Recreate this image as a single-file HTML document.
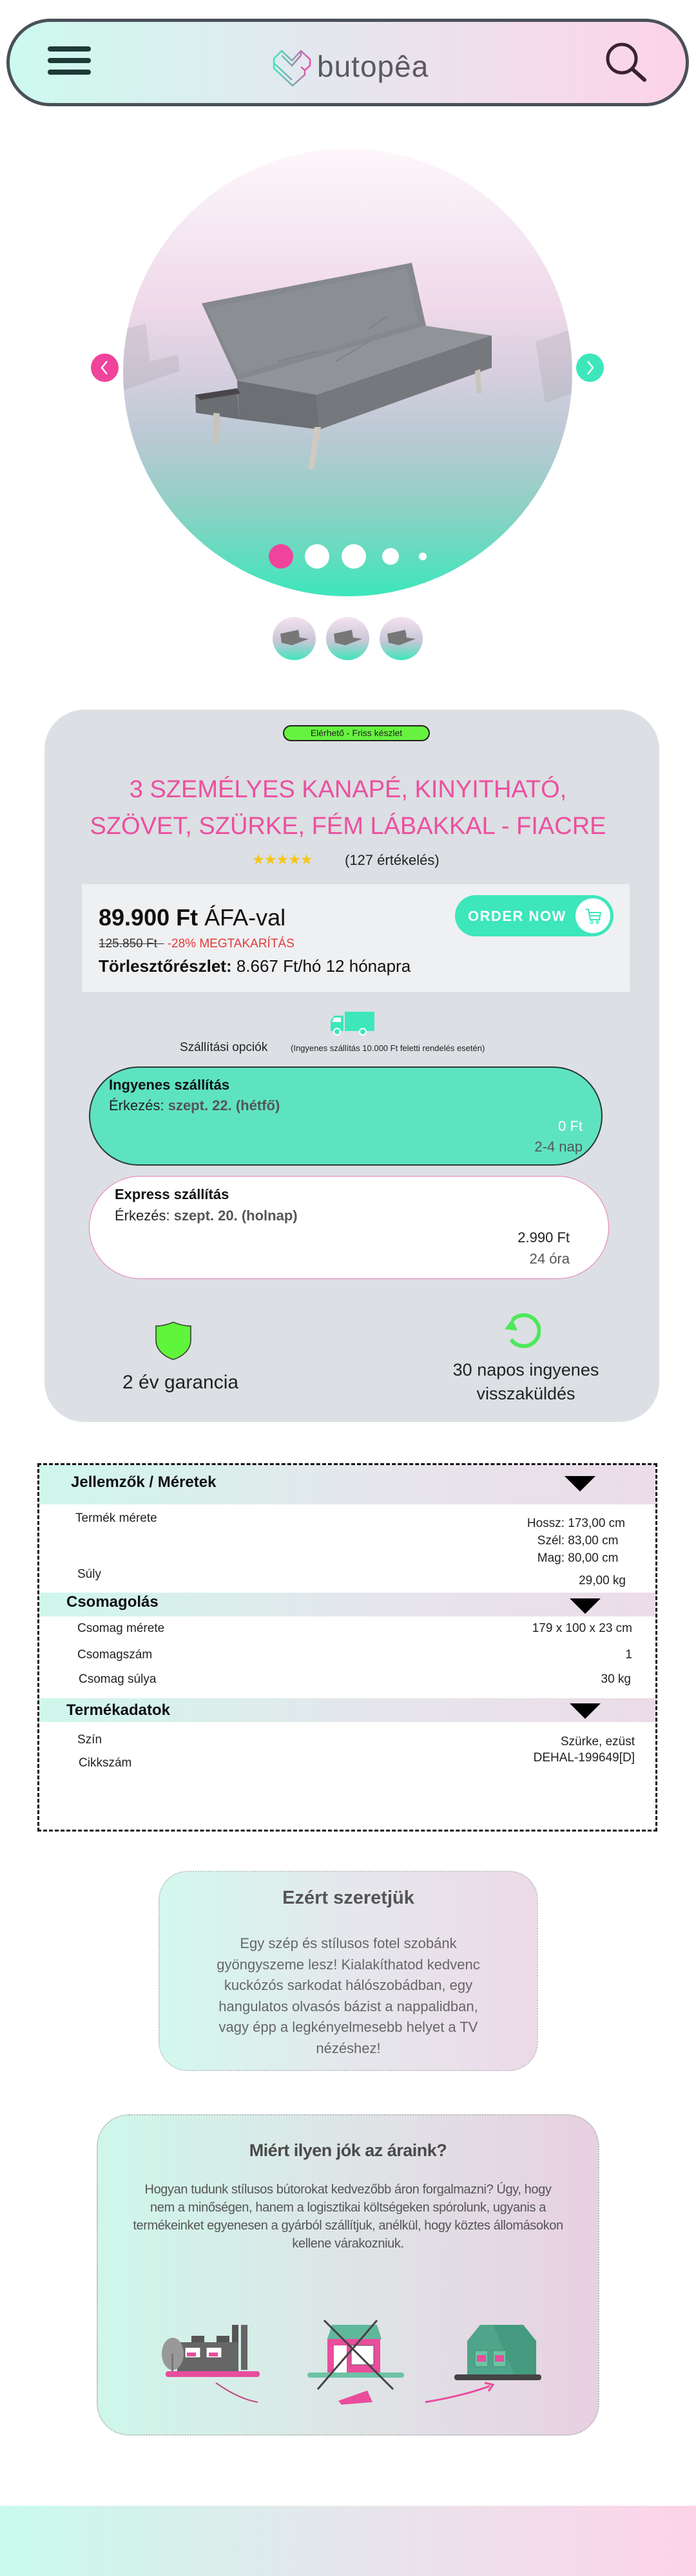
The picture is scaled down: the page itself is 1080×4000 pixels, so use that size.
<!DOCTYPE html>
<html><head><meta charset="utf-8">
<style>
*{margin:0;padding:0;box-sizing:border-box}
body{width:1080px;height:4000px;position:relative;background:#fff;font-family:"Liberation Sans",sans-serif;overflow:hidden;color:#111}
.a{position:absolute;white-space:nowrap}
.hdr{left:10px;top:29px;width:1059px;height:136px;border-radius:68px;border:5px solid #4a5058;background:linear-gradient(90deg,#cdfaee,#e6e6ee 50%,#fdd3e8)}
.circ{left:191px;top:231px;width:697px;height:695px;border-radius:50%;background:linear-gradient(180deg,#fdf7fb 0%,#efd9ea 35%,#d7cfe0 50%,#b9c9d3 65%,#8fd0c6 80%,#3de6bb 100%);overflow:hidden}
.dot{position:absolute;border-radius:50%;background:#fff}
.thumb{position:absolute;top:958px;width:67px;height:67px;border-radius:50%;background:linear-gradient(180deg,#f5e3f0,#c9c6d8 55%,#3de6bb)}
.card{left:69px;top:1102px;width:954px;height:1106px;border-radius:62px;background:#dcdfe3}
.t{position:absolute;white-space:nowrap;line-height:1}
.row{position:absolute;font-size:19px;color:#222;line-height:1}
.hrow{position:absolute;left:61px;width:956px;background:linear-gradient(90deg,#cff7ec,#e6e6ec 55%,#ecdce8)}
.tri{position:absolute;width:0;height:0;border-left:24px solid transparent;border-right:24px solid transparent;border-top:24px solid #000}
</style></head><body>

<div class="a hdr"></div>
<div class="a" style="left:74px;top:72px;width:67px;height:45px">
 <div style="height:8px;background:#1d3a36;border-radius:4px;margin-bottom:10px"></div>
 <div style="height:8px;background:#1d3a36;border-radius:4px;margin-bottom:10px"></div>
 <div style="height:8px;background:#1d3a36;border-radius:4px"></div>
</div>
<svg class="a" style="left:421px;top:76px" width="66" height="60" viewBox="0 0 66 60">
 <defs><linearGradient id="lg" x1="0" x2="1"><stop offset="0" stop-color="#3de6bb"/><stop offset="0.6" stop-color="#8a9bb0"/><stop offset="1" stop-color="#f04ab0"/></linearGradient></defs>
 <g fill="none" stroke="url(#lg)" stroke-width="2.5" stroke-linejoin="round">
  <path d="M4 15 L16 3 L32 18 L46 3 L60 16 L60 26 L52 33 L52 40 L33 57 L4 30 Z"/>
  <path d="M4 22 L32 48 M16 10 L32 26 L46 10 M46 3 L46 10 M52 33 L46 28"/>
 </g>
</svg>
<div class="a" style="left:492px;top:78px;font-size:46px;color:#5a5860;letter-spacing:1px;line-height:50px">butopêa</div>
<svg class="a" style="left:938px;top:64px" width="68" height="64" viewBox="0 0 68 64">
 <circle cx="27" cy="27" r="22" fill="none" stroke="#3a2230" stroke-width="5"/>
 <path d="M43 43 L62 60" stroke="#3a2230" stroke-width="6" stroke-linecap="round"/>
</svg>

<div class="a circ">
 <svg style="position:absolute;left:0;top:0" width="697" height="695" viewBox="0 0 697 695">
  <g opacity="0.18" fill="#888">
   <path d="M0 280 L35 272 L42 330 L85 320 L88 345 L0 375 Z"/>
   <path d="M640 300 L695 280 L697 380 L655 395 Z"/>
  </g>
  <path d="M122 240 L448 177 L470 275 L177 360 Z" fill="#85888c"/>
  <path d="M130 248 L440 186 L458 270 L180 350 Z" fill="#8b8e92"/>
  <path d="M177 360 L470 275 L572 290 L300 382 Z" fill="#909397"/>
  <path d="M300 382 L572 290 L572 340 L305 436 Z" fill="#75787c"/>
  <path d="M177 360 L300 382 L305 436 L180 420 Z" fill="#6c6f73"/>
  <path d="M112 382 L177 372 L180 420 L113 410 Z" fill="#6a6d71"/>
  <path d="M112 382 L177 372 L182 380 L120 390 Z" fill="#4a4548"/>
  <path d="M140 410 L150 411 L148 460 L140 458 Z" fill="#c8c4bc"/>
  <path d="M297 432 L307 432 L296 498 L287 497 Z" fill="#cfcac2"/>
  <path d="M546 345 L554 342 L556 380 L549 380 Z" fill="#c8c4bc"/>
  <path d="M240 330 L300 315 M330 330 L380 300 M380 280 L410 260" stroke="#7a7d81" stroke-width="1.5"/>
 </svg>
 <div class="dot" style="left:226px;top:614px;width:38px;height:38px;background:#f0449c"></div>
 <div class="dot" style="left:282px;top:614px;width:38px;height:38px"></div>
 <div class="dot" style="left:339px;top:614px;width:38px;height:38px"></div>
 <div class="dot" style="left:402px;top:620px;width:26px;height:26px"></div>
 <div class="dot" style="left:459px;top:627px;width:12px;height:12px"></div>
</div>
<div class="a" style="left:141px;top:549px;width:43px;height:44px;border-radius:50%;background:#f0449c"></div>
<svg class="a" style="left:141px;top:549px" width="43" height="44"><path d="M25 12 L17 22 L25 32" fill="none" stroke="#fff" stroke-width="2.5"/></svg>
<div class="a" style="left:894px;top:549px;width:43px;height:44px;border-radius:50%;background:#3de6bb"></div>
<svg class="a" style="left:894px;top:549px" width="43" height="44"><path d="M18 12 L26 22 L18 32" fill="none" stroke="#fff" stroke-width="2.5"/></svg>
<div class="thumb" style="left:423px"></div>
<div class="thumb" style="left:506px"></div>
<div class="thumb" style="left:589px"></div>
<svg class="a" style="left:423px;top:958px" width="250" height="67"><g fill="#777">
<path d="M12 26 L40 20 L42 32 L56 34 L30 44 L14 40 Z"/><path d="M95 26 L123 20 L125 32 L139 34 L113 44 L97 40 Z"/><path d="M178 26 L206 20 L208 32 L222 34 L196 44 L180 40 Z"/></g></svg>

<div class="a card"></div>
<div class="a" style="left:439px;top:1126px;width:228px;height:25px;border-radius:13px;background:#66f33f;border:2px solid #222;font-size:14px;text-align:center;line-height:21px;color:#222">Elérhető - Friss készlet</div>
<div class="t" style="left:0;width:1080px;text-align:center;top:1207px;font-size:38px;color:#ec4fa0">3 SZEMÉLYES KANAPÉ, KINYITHATÓ,</div>
<div class="t" style="left:0;width:1080px;text-align:center;top:1264px;font-size:38px;color:#ec4fa0">SZÖVET, SZÜRKE, FÉM LÁBAKKAL - FIACRE</div>
<div class="t" style="left:391px;top:1324px;font-size:22px;color:#f5c518;letter-spacing:-1px">★★★★★</div>
<div class="t" style="left:535px;top:1325px;font-size:22px;color:#222">(127 értékelés)</div>

<div class="a" style="left:127px;top:1373px;width:850px;height:167px;background:#eff0f2"></div>
<div class="t" style="left:153px;top:1407px;font-size:36px;color:#111"><b>89.900 Ft</b> ÁFA-val</div>
<div class="t" style="left:153px;top:1456px;font-size:19px;color:#333"><s>125.850 Ft&nbsp;&nbsp;</s> <span style="color:#e23a3a">-28% MEGTAKARÍTÁS</span></div>
<div class="t" style="left:153px;top:1487px;font-size:26px;color:#111"><b>Törlesztőrészlet:</b> 8.667 Ft/hó 12 hónapra</div>
<div class="a" style="left:706px;top:1390px;width:246px;height:64px;border-radius:32px;background:#3de6bb"></div>
<div class="t" style="left:726px;top:1412px;font-size:22px;font-weight:bold;color:#fff;letter-spacing:1.5px">ORDER NOW</div>
<div class="a" style="left:893px;top:1395px;width:54px;height:54px;border-radius:50%;background:#fff"></div>
<svg class="a" style="left:900px;top:1402px" width="40" height="40" viewBox="0 0 40 40"><path d="M9 10 L13 10 L16 26 L30 26 L32 15 L14 15 M16 20 L31 20" fill="none" stroke="#3de6bb" stroke-width="2"/><circle cx="18" cy="30" r="2" fill="none" stroke="#3de6bb" stroke-width="1.5"/><circle cx="27" cy="30" r="2" fill="none" stroke="#3de6bb" stroke-width="1.5"/></svg>

<svg class="a" style="left:511px;top:1571px" width="70" height="38" viewBox="0 0 70 38"><path d="M24 0 H70 V30 H24 Z" fill="#3de6bb"/><path d="M2 14 L8 6 H22 V30 H2 Z" fill="#3de6bb"/><path d="M8 9 H18 V16 H4 Z" fill="#fff"/><circle cx="12" cy="31" r="5" fill="#3de6bb" stroke="#fff" stroke-width="2"/><circle cx="52" cy="31" r="5" fill="#3de6bb" stroke="#fff" stroke-width="2"/></svg>
<div class="t" style="left:279px;top:1617px;font-size:19px;color:#222">Szállítási opciók</div>
<div class="t" style="left:451px;top:1621px;font-size:13px;color:#222">(Ingyenes szállítás 10.000 Ft feletti rendelés esetén)</div>

<div class="a" style="left:138px;top:1656px;width:797px;height:154px;border-radius:77px;background:#5ee3c1;border:2px solid #2a3a36"></div>
<div class="t" style="left:169px;top:1674px;font-size:22px;font-weight:bold;color:#111">Ingyenes szállítás</div>
<div class="t" style="left:169px;top:1706px;font-size:22px;color:#222">Érkezés: <b style="color:#555">szept. 22. (hétfő)</b></div>
<div class="t" style="left:700px;width:204px;text-align:right;top:1738px;font-size:22px;color:#fff">0 Ft</div>
<div class="t" style="left:700px;width:204px;text-align:right;top:1770px;font-size:22px;color:#555">2-4 nap</div>

<div class="a" style="left:138px;top:1826px;width:807px;height:160px;border-radius:80px;background:#fff;border:1.5px solid #e87cb6"></div>
<div class="t" style="left:178px;top:1844px;font-size:22px;font-weight:bold;color:#111">Express szállítás</div>
<div class="t" style="left:178px;top:1877px;font-size:22px;color:#222">Érkezés: <b style="color:#555">szept. 20. (holnap)</b></div>
<div class="t" style="left:680px;width:204px;text-align:right;top:1911px;font-size:22px;color:#222">2.990 Ft</div>
<div class="t" style="left:680px;width:204px;text-align:right;top:1944px;font-size:22px;color:#555">24 óra</div>

<svg class="a" style="left:240px;top:2051px" width="58" height="62" viewBox="0 0 58 62"><path d="M29 2 C20 6 10 8 2 8 V30 C2 46 16 56 29 60 C42 56 56 46 56 30 V8 C48 8 38 6 29 2 Z" fill="#5ff53a" stroke="#333" stroke-width="1.5"/></svg>
<div class="t" style="left:130px;width:300px;text-align:center;top:2132px;font-size:30px;color:#222">2 év garancia</div>
<svg class="a" style="left:777px;top:2034px" width="62" height="60" viewBox="0 0 62 60"><path d="M18 16 A24 24 0 1 1 16 46" fill="none" stroke="#4ee85a" stroke-width="6"/><path d="M6 30 L18 14 L26 32 Z" fill="#4ee85a"/></svg>
<div class="t" style="left:616px;width:400px;text-align:center;top:2109px;font-size:27px;color:#222;line-height:37px">30 napos ingyenes<br>visszaküldés</div>

<div class="a" style="left:58px;top:2272px;width:962px;height:572px;border:3px dashed #111"></div>
<div class="hrow" style="top:2275px;height:61px"></div>
<div class="t" style="left:110px;top:2290px;font-size:24px;font-weight:bold">Jellemzők / Méretek</div>
<div class="tri" style="left:876px;top:2292px"></div>
<div class="row" style="left:117px;top:2348px">Termék mérete</div>
<div class="row" style="left:700px;width:270px;text-align:right;top:2352px;line-height:27px">Hossz: 173,00 cm<br>Szél: 83,00 cm&nbsp;&nbsp;<br>Mag: 80,00 cm&nbsp;&nbsp;</div>
<div class="row" style="left:120px;top:2435px">Súly</div>
<div class="row" style="left:700px;width:271px;text-align:right;top:2445px">29,00 kg</div>
<div class="hrow" style="top:2473px;height:37px"></div>
<div class="t" style="left:103px;top:2476px;font-size:24px;font-weight:bold">Csomagolás</div>
<div class="tri" style="left:884px;top:2482px"></div>
<div class="row" style="left:120px;top:2519px">Csomag mérete</div>
<div class="row" style="left:700px;width:281px;text-align:right;top:2519px">179 x 100 x 23 cm</div>
<div class="row" style="left:120px;top:2560px">Csomagszám</div>
<div class="row" style="left:700px;width:281px;text-align:right;top:2560px">1</div>
<div class="row" style="left:122px;top:2598px">Csomag súlya</div>
<div class="row" style="left:700px;width:279px;text-align:right;top:2598px">30 kg</div>
<div class="hrow" style="top:2637px;height:37px"></div>
<div class="t" style="left:103px;top:2644px;font-size:24px;font-weight:bold">Termékadatok</div>
<div class="tri" style="left:884px;top:2645px"></div>
<div class="row" style="left:120px;top:2692px">Szín</div>
<div class="row" style="left:700px;width:285px;text-align:right;top:2692px;line-height:25px">Szürke, ezüst<br>DEHAL-199649[D]</div>
<div class="row" style="left:122px;top:2728px">Cikkszám</div>

<div class="a" style="left:246px;top:2905px;width:589px;height:311px;border-radius:45px;border:2px dotted #c8c8c8;background:linear-gradient(90deg,#d3f8ee,#e6e6ec 55%,#ecdae8)"></div>
<div class="t" style="left:246px;width:589px;text-align:center;top:2933px;font-size:29px;font-weight:bold;color:#555">Ezért szeretjük</div>
<div class="a" style="left:246px;width:589px;text-align:center;top:3002px;font-size:22px;color:#666;line-height:32.5px">Egy szép és stílusos fotel szobánk<br>gyöngyszeme lesz! Kialakíthatod kedvenc<br>kuckózós sarkodat hálószobádban, egy<br>hangulatos olvasós bázist a nappalidban,<br>vagy épp a legkényelmesebb helyet a TV<br>nézéshez!</div>

<div class="a" style="left:150px;top:3283px;width:780px;height:499px;border-radius:50px;border:2px dotted #bbb;background:linear-gradient(90deg,#cef7ea,#dfe3e6 55%,#e8d0e2)"></div>
<div class="t" style="left:150px;width:780px;text-align:center;top:3326px;font-size:27px;font-weight:bold;color:#4a4a4a;letter-spacing:-0.5px">Miért ilyen jók az áraink?</div>
<div class="a" style="left:150px;width:780px;text-align:center;top:3386px;font-size:20px;color:#555;line-height:28px;letter-spacing:-0.4px">Hogyan tudunk stílusos bútorokat kedvezőbb áron forgalmazni? Úgy, hogy<br>nem a minőségen, hanem a logisztikai költségeken spórolunk, ugyanis a<br>termékeinket egyenesen a gyárból szállítjuk, anélkül, hogy köztes állomásokon<br>kellene várakozniuk.</div>
<svg class="a" style="left:240px;top:3600px" width="620" height="135" viewBox="0 0 620 135">
 <rect x="120" y="10" width="10" height="70" fill="#555"/><rect x="134" y="10" width="10" height="70" fill="#666"/>
 <rect x="57" y="27" width="20" height="12" fill="#555"/><rect x="96" y="27" width="20" height="12" fill="#555"/>
 <rect x="35" y="37" width="95" height="45" fill="#666"/>
 <rect x="47" y="45" width="24" height="16" fill="#fff" stroke="#555"/><rect x="80" y="45" width="24" height="16" fill="#fff" stroke="#555"/>
 <rect x="50" y="53" width="14" height="6" fill="#e94d9c"/><rect x="84" y="53" width="14" height="6" fill="#e94d9c"/>
 <ellipse cx="28" cy="55" rx="17" ry="25" fill="#999"/><rect x="26" y="55" width="3" height="28" fill="#777"/>
 <rect x="17" y="82" width="146" height="9" rx="4" fill="#e94d9c"/>
 <rect x="268" y="30" width="82" height="55" fill="#e94d9c"/>
 <path d="M268 32 L275 10 H345 L352 32 Z" fill="#5fb89a"/>
 <rect x="278" y="42" width="20" height="42" fill="#fff"/><rect x="305" y="42" width="35" height="30" fill="#fff" stroke="#555"/>
 <rect x="237" y="84" width="150" height="8" rx="4" fill="#6cc3a4"/>
 <path d="M263 3 L370 110 M345 3 L253 110" stroke="#444" stroke-width="3"/>
 <path d="M285 128 L330 112 L338 130 L290 134 Z" fill="#e94d9c"/>
 <path d="M485 35 L505 10 H572 L592 35 V92 H485 Z" fill="#4fa58a"/>
 <path d="M525 10 L572 10 L592 35 L592 92 L560 92 Z" fill="#3e9478" opacity="0.6"/>
 <rect x="497" y="50" width="20" height="25" fill="#6cc3a4" stroke="#3e8a70"/><rect x="525" y="50" width="20" height="25" fill="#6cc3a4" stroke="#3e8a70"/>
 <rect x="500" y="57" width="14" height="10" fill="#e94d9c"/><rect x="528" y="57" width="14" height="10" fill="#e94d9c"/>
 <rect x="465" y="87" width="135" height="9" rx="4" fill="#444"/>
 <path d="M95 100 Q130 125 160 130" stroke="#c04a88" stroke-width="2" fill="none"/>
 <path d="M420 130 Q480 120 520 105" stroke="#e94d9c" stroke-width="3" fill="none"/><path d="M512 100 L525 103 L518 113" fill="none" stroke="#e94d9c" stroke-width="3"/>
</svg>

<div class="a" style="left:0;top:3891px;width:1080px;height:109px;background:linear-gradient(90deg,#c8faec,#e6e6ec 50%,#fdd3e8)"></div>
</body></html>
